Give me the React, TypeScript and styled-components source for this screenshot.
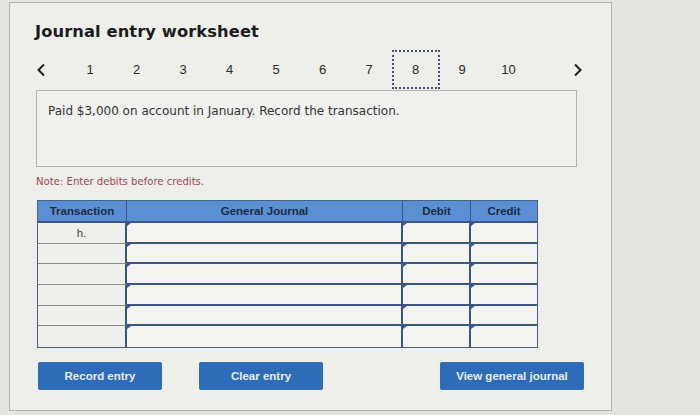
import React from "react";
import styled, { createGlobalStyle } from "styled-components";

const Global = createGlobalStyle`
  html, body { margin: 0; padding: 0; background: #e4e4e1; }
  body { width: 700px; height: 415px; overflow: hidden; }
`;

const Page = styled.div`
  padding: 2px 0 0 9px;
  height: 415px;
  box-sizing: border-box;
`;

const Panel = styled.div`
  width: 603px;
  height: 409px;
  box-sizing: border-box;
  border: 1px solid #b2b2af;
  background: #eeeeeb;
  padding: 0 0 0 26px;
  display: flex;
  flex-direction: column;
`;

const Title = styled.h1`
  margin: 18px 0 0 -1px;
  font-family: "DejaVu Sans", Verdana, sans-serif;
  font-weight: bold;
  font-size: 16.3px;
  line-height: 22px;
  color: #1c1c1c;
  letter-spacing: 0.1px;
`;

const NavRow = styled.div`
  display: flex;
  align-items: center;
  height: 39px;
  margin-top: 7px;
`;

const ArrowBtn = styled.div<{ $w: number; $ml?: number }>`
  width: ${(p) => p.$w}px;
  margin-left: ${(p) => p.$ml ?? 0}px;
  height: 39px;
  display: flex;
  align-items: center;
  justify-content: flex-start;
`;

const NavItem = styled.div<{ $active?: boolean }>`
  height: 39px;
  box-sizing: border-box;
  display: flex;
  align-items: center;
  justify-content: center;
  font-family: "Liberation Sans", Arial, sans-serif;
  font-size: 13px;
  color: #2a2a2a;
  border: 2px dotted ${(p) => (p.$active ? "#3f4e6c" : "transparent")};
  margin: ${(p) => (p.$active ? "0 -0.75px" : "0")};
  width: ${(p) => (p.$active ? "48px" : "46.5px")};
`;

const QuestionBox = styled.div`
  width: 541px;
  height: 77px;
  margin-top: 1px;
  box-sizing: border-box;
  border: 1px solid #b3b3b0;
  background: #f1f1ef;
  padding: 13px 0 0 11px;
  font-family: "DejaVu Sans", Verdana, sans-serif;
  font-size: 12px;
  color: #333;
`;

const Note = styled.div`
  margin-top: 8px;
  font-family: "DejaVu Sans", Verdana, sans-serif;
  font-size: 10.1px;
  color: #9c4b4b;
  line-height: 14px;
`;

const Grid = styled.div`
  margin: 11px 0 0 1px;
  width: max-content;
  display: grid;
  grid-template-columns: 89px 276px 68px 66px;
  grid-template-rows: 22px repeat(6, 20.66px);
  border: 1px solid #4a5f86;
  background: #f2f2ef;
`;

const Head = styled.div<{ $last?: boolean }>`
  background: #5a8fd3;
  display: flex;
  align-items: center;
  justify-content: center;
  font-family: "Liberation Sans", Arial, sans-serif;
  font-weight: bold;
  font-size: 11.5px;
  color: #1d2b45;
  border-right: ${(p) => (p.$last ? "none" : "1px solid #3b5689")};
  border-bottom: 2px solid #3b5689;
`;

const TxCell = styled.div<{ $last?: boolean }>`
  border-bottom: ${(p) => (p.$last ? "none" : "1px solid #8b8b88")};
  border-right: 2px solid #3d5584;
  display: flex;
  align-items: center;
  justify-content: center;
  font-family: "Liberation Sans", Arial, sans-serif;
  font-size: 11.5px;
  color: #444;
  background: #efefec;
`;

const InputCell = styled.div<{ $last?: boolean; $lastCol?: boolean }>`
  position: relative;
  border-bottom: ${(p) => (p.$last ? "none" : "2px solid #3d5584")};
  border-right: ${(p) => (p.$lastCol ? "none" : "2px solid #3d5584")};
  background: #f4f4f1;
  &::before {
    content: "";
    position: absolute;
    left: 0;
    top: 0;
    border-top: 3px solid #2f5aa6;
    border-right: 4px solid transparent;
    border-bottom: 3px solid transparent;
  }
`;

const ButtonRow = styled.div`
  display: flex;
  align-items: center;
  margin-top: 14px;
  margin-left: 2px;
`;

const Button = styled.button<{ $w: number; $ml: number }>`
  width: ${(p) => p.$w}px;
  height: 28px;
  margin-left: ${(p) => p.$ml}px;
  border: none;
  border-radius: 2px;
  background: #2f6cb8;
  color: #e6edf7;
  font-family: "Liberation Sans", Arial, sans-serif;
  font-weight: bold;
  font-size: 11.5px;
  padding: 0;
  cursor: pointer;
`;

const Chevron = ({ dir }: { dir: "left" | "right" }) => (
  <svg width="10" height="14" viewBox="0 0 10 14">
    <path
      d={dir === "left" ? "M8 1.5 L2.5 7 L8 12.5" : "M2 1.5 L7.5 7 L2 12.5"}
      fill="none"
      stroke="#1e1e1e"
      strokeWidth="2"
    />
  </svg>
);

export default function App() {
  const rows = [0, 1, 2, 3, 4, 5];
  return (
    <>
      <Global />
      <Page>
        <Panel>
          <Title>Journal entry worksheet</Title>
          <NavRow>
            <ArrowBtn $w={30.75}>
              <Chevron dir="left" />
            </ArrowBtn>
            {[1, 2, 3, 4, 5, 6, 7, 8, 9, 10].map((n) => (
              <NavItem key={n} $active={n === 8}>
                {n}
              </NavItem>
            ))}
            <ArrowBtn $w={20} $ml={41}>
              <Chevron dir="right" />
            </ArrowBtn>
          </NavRow>
          <QuestionBox>
            Paid $3,000 on account in January. Record the transaction.
          </QuestionBox>
          <Note>Note: Enter debits before credits.</Note>
          <Grid>
            <Head>Transaction</Head>
            <Head>General Journal</Head>
            <Head>Debit</Head>
            <Head $last>Credit</Head>
            {rows.map((r) => (
              <React.Fragment key={r}>
                <TxCell $last={r === 5}>{r === 0 ? "h." : ""}</TxCell>
                <InputCell $last={r === 5} />
                <InputCell $last={r === 5} />
                <InputCell $last={r === 5} $lastCol />
              </React.Fragment>
            ))}
          </Grid>
          <ButtonRow>
            <Button $w={124} $ml={0}>Record entry</Button>
            <Button $w={124} $ml={37}>Clear entry</Button>
            <Button $w={144} $ml={117}>View general journal</Button>
          </ButtonRow>
        </Panel>
      </Page>
    </>
  );
}
